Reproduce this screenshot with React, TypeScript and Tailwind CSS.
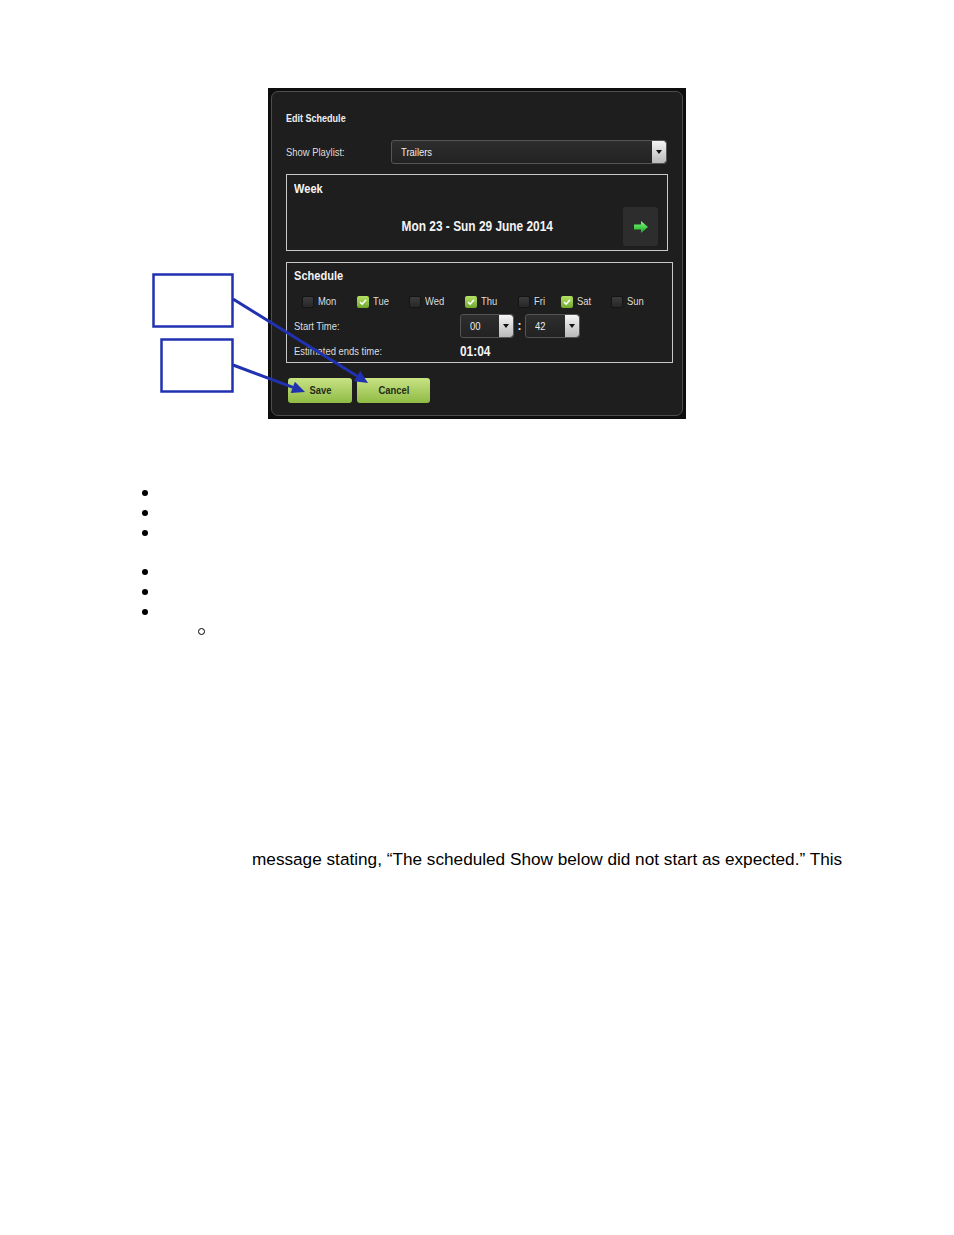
import React from "react";

const days = [
  { label: "Mon", on: false },
  { label: "Tue", on: true },
  { label: "Wed", on: false },
  { label: "Thu", on: true },
  { label: "Fri", on: false },
  { label: "Sat", on: true },
  { label: "Sun", on: false },
];

// the app uses an Arial Narrow look: Liberation Sans squeezed horizontally
function Narrow({ children, center }: { children: React.ReactNode; center?: boolean }) {
  return (
    <span className={`inline-block whitespace-nowrap scale-x-[0.82] ${center ? "origin-center" : "origin-left"}`}>
      {children}
    </span>
  );
}

function Check({ on }: { on: boolean }) {
  if (on) {
    return (
      <span className="flex h-[12px] w-[12px] shrink-0 items-center justify-center rounded-[2px] bg-linear-to-b from-[#b6e266] to-[#6fa82a]">
        <svg viewBox="0 0 12 12" className="h-[10px] w-[10px]">
          <path d="M2.4 6.2 L5 8.6 L9.6 3.2" fill="none" stroke="#fff" strokeWidth="1.8" />
        </svg>
      </span>
    );
  }
  return <span className="h-[12px] w-[12px] shrink-0 rounded-[2px] border border-[#141414] bg-linear-to-b from-[#3c3c3c] to-[#272727]" />;
}

function DropArrow() {
  return (
    <span className="flex h-full w-[14px] items-center justify-center rounded-r-[3px] bg-linear-to-b from-[#f6f6f6] to-[#b9b9b9]">
      <svg viewBox="0 0 6 4" className="h-[4px] w-[6px]">
        <polygon points="0,0 6,0 3,4" fill="#111" />
      </svg>
    </span>
  );
}

function Select({ value, w }: { value: string; w: string }) {
  return (
    <div className={`flex h-[24px] ${w} overflow-hidden rounded-[3px] border border-[#555] bg-linear-to-b from-[#2e2e2e] to-[#222]`}>
      <span className="flex-1 pl-[9px] text-[11.5px] leading-[22px] text-[#eee]">
        <Narrow>{value}</Narrow>
      </span>
      <DropArrow />
    </div>
  );
}

function EditScheduleDialog() {
  return (
    <div className="ml-[268px] mt-[88px] h-[331px] w-[418px] bg-[#0e0e0e] p-[3px] font-['Liberation_Sans',Arial,sans-serif]">
      <div className="h-full rounded-[7px] border border-[#4d4d4d] bg-[#1e1e1e] pl-[14px] pr-[10px] pt-[19px]">
        <div className="h-[14px] text-[11px] font-bold leading-[14px] text-[#eee]">
          <Narrow>Edit Schedule</Narrow>
        </div>

        <div className="mt-[15px] flex h-[24px] items-center">
          <span className="w-[105px] pt-[1px] text-[11.5px] text-[#ddd]">
            <Narrow>Show Playlist:</Narrow>
          </span>
          <Select value="Trailers" w="w-[276px]" />
        </div>

        <div className="mt-[10px] h-[77px] w-[382px] border border-[#c8c8c8]">
          <div className="pl-[7px] pt-[7px] text-[13.5px] font-bold leading-[14px] text-[#f4f4f4]">
            <Narrow>Week</Narrow>
          </div>
          <div className="mt-[11px] grid h-[39px] grid-cols-[1fr_auto_1fr] items-center">
            <span />
            <span className="pt-[1px] text-[14.5px] font-bold text-[#f4f4f4]">
              <Narrow center>Mon 23 - Sun 29 June 2014</Narrow>
            </span>
            <span className="mr-[9px] flex h-[39px] w-[35px] items-center justify-center justify-self-end rounded-[3px] bg-[#2d2d2d]">
              <svg viewBox="0 0 14 12" className="h-[12px] w-[14px]">
                <defs>
                  <linearGradient id="ga" x1="0" y1="0" x2="0" y2="1">
                    <stop offset="0" stopColor="#7dff7d" />
                    <stop offset="1" stopColor="#18a61f" />
                  </linearGradient>
                </defs>
                <polygon points="0,3.5 7,3.5 7,0 14,6 7,12 7,8.5 0,8.5" fill="url(#ga)" />
              </svg>
            </span>
          </div>
        </div>

        <div className="mt-[11px] h-[101px] w-[387px] border border-[#c8c8c8]">
          <div className="pl-[7px] pt-[6px] text-[13.5px] font-bold leading-[14px] text-[#f4f4f4]">
            <Narrow>Schedule</Narrow>
          </div>
          <div className="mt-[10px] grid h-[14px] grid-cols-[55px_52px_56px_53px_43px_50px_auto] pl-[15px]">
            {days.map((d) => (
              <span key={d.label} className="flex items-center gap-[4px] text-[11.5px] text-[#ddd]">
                <Check on={d.on} />
                <Narrow>{d.label}</Narrow>
              </span>
            ))}
          </div>
          <div className="mt-[7px] flex h-[24px] items-center pl-[7px]">
            <span className="w-[166px] pt-[1px] text-[11.5px] text-[#ddd]">
              <Narrow>Start Time:</Narrow>
            </span>
            <Select value="00" w="w-[54px]" />
            <span className="w-[11px] text-center text-[12px] font-bold text-[#eee]">:</span>
            <Select value="42" w="w-[55px]" />
          </div>
          <div className="mt-[7px] flex h-[14px] items-center pl-[7px]">
            <span className="w-[166px] text-[11.5px] text-[#ddd]">
              <Narrow>Estimated ends time:</Narrow>
            </span>
            <span className="text-[14.5px] font-bold text-[#f4f4f4]">
              <Narrow>01:04</Narrow>
            </span>
          </div>
        </div>

        <div className="mt-[15px] flex gap-[5px] pl-[2px]">
          <button className="h-[25px] w-[64px] rounded-[3px] bg-linear-to-b from-[#c9e384] to-[#8fbb43] text-[11.5px] font-bold text-[#252b17]">
            <Narrow center>Save</Narrow>
          </button>
          <button className="h-[25px] w-[73px] rounded-[3px] bg-linear-to-b from-[#c9e384] to-[#8fbb43] text-[11.5px] font-bold text-[#252b17]">
            <Narrow center>Cancel</Narrow>
          </button>
        </div>
      </div>
    </div>
  );
}

function Dot() {
  return (
    <div className="flex h-[20px] items-center">
      <span className="ml-[142px] h-[6px] w-[6px] rounded-full bg-black" />
    </div>
  );
}

export default function App() {
  return (
    <div className="relative h-[1235px] w-[954px] overflow-hidden bg-white font-['Liberation_Sans',Arial,sans-serif] text-black">
      <EditScheduleDialog />

      <div className="mt-[64px]">
        <Dot />
        <Dot />
        <Dot />
        <div className="h-[19px]" />
        <Dot />
        <Dot />
        <Dot />
        <div className="flex h-[19px] items-center">
          <span className="ml-[198px] h-[7px] w-[7px] rounded-full border border-black" />
        </div>
      </div>

      <p className="ml-[252px] mt-[208px] text-[17.2px] leading-[20px]">
        message stating, “The scheduled Show below did not start as expected.” This
      </p>

      <svg className="pointer-events-none absolute left-0 top-0" width="954" height="1235">
        <g stroke="#2132b0" fill="none" strokeWidth="2.5">
          <rect x="153.5" y="274.5" width="79" height="52" />
          <rect x="161.5" y="339.5" width="71" height="52" />
          <line x1="233" y1="299" x2="357" y2="376" strokeWidth="3" />
          <line x1="233" y1="365" x2="293" y2="387.4" strokeWidth="3" />
        </g>
        <polygon points="368,383 353.8,381.2 360.2,371" fill="#2132b0" />
        <polygon points="305,392 290.7,393 294.9,381.8" fill="#2132b0" />
      </svg>
    </div>
  );
}
